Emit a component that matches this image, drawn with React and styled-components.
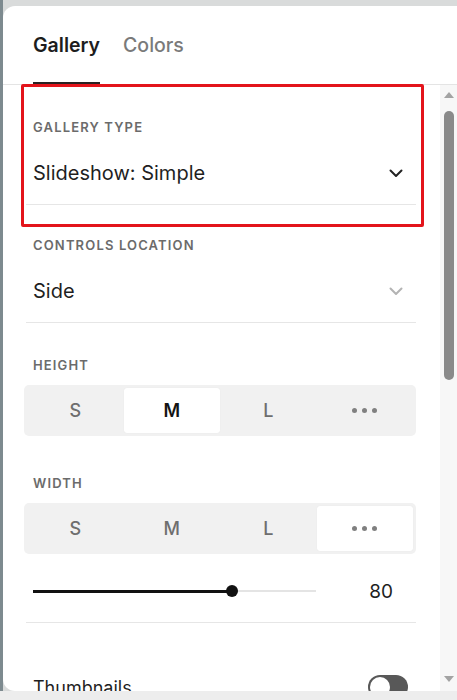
import React from "react";
import styled, { createGlobalStyle } from "styled-components";

const GlobalStyle = createGlobalStyle`
  html, body { margin: 0; padding: 0; }
  body {
    background: #d9dbdb;
    font-family: Inter, "Noto Sans", sans-serif;
    -webkit-font-smoothing: antialiased;
  }
`;

const Frame = styled.div`
  width: 457px;
  height: 700px;
  display: flex;
  flex-direction: column;
  padding-top: 6px;
  box-sizing: border-box;
  background: linear-gradient(90deg, #7d8a8f 0, #7d8a8f 3px, transparent 3px);
`;

const Panel = styled.div`
  position: relative;
  height: 685px;
  margin-left: 3px;
  background: #fff;
  border-radius: 12px 0 0 12px;
  overflow: hidden;
  display: flex;
  flex-direction: column;
  flex-shrink: 0;
`;

const BottomBar = styled.div`
  flex: 1;
  background: #ededed;
`;

const Header = styled.div`
  height: 78px;
  flex-shrink: 0;
  border-bottom: 1px solid #e4e4e4;
  display: flex;
  padding-left: 30px;
  gap: 23px;
`;

const Tab = styled.div`
  height: 78px;
  box-sizing: border-box;
  padding-top: 27px;
  font-size: 19.5px;
  line-height: 24px;
  font-weight: ${(p) => (p.$active ? 600 : 500)};
  color: ${(p) => (p.$active ? "#1d1d1d" : "#7a7a7a")};
  border-bottom: 2px solid ${(p) => (p.$active ? "#2a2222" : "transparent")};
`;

const Body = styled.div`
  flex: 1;
  min-height: 0;
  display: flex;
`;

const Content = styled.div`
  flex: 1;
  padding: 1px 24px 0 21px;
  overflow: hidden;
`;

const Section = styled.div`
  padding-top: ${(p) => p.$top}px;
  padding-bottom: ${(p) => p.$bottom}px;
  border-bottom: 1px solid #e6e6e6;
  margin-left: 2px;
`;

const Inner = styled.div`
  margin-left: -2px;
`;

const Label = styled.div`
  font-size: 13px;
  line-height: 16px;
  font-weight: 600;
  letter-spacing: 1.15px;
  color: #6b6b6b;
  padding-left: 9px;
  margin-bottom: ${(p) => p.$gap}px;
  margin-top: ${(p) => p.$mt || 0}px;
`;

const ValueRow = styled.div`
  height: 40px;
  display: flex;
  align-items: center;
  justify-content: space-between;
  padding: 0 13px 0 9px;
  font-size: 20px;
  color: #1f1f1f;
`;

const Chevron = ({ light }) => (
  <svg width="14" height="9" viewBox="0 0 14 9" fill="none">
    <path
      d="M1.5 1.5 L7 7 L12.5 1.5"
      stroke={light ? "#b3b3b3" : "#222"}
      strokeWidth="2"
      strokeLinecap="round"
      strokeLinejoin="round"
    />
  </svg>
);

const Segmented = styled.div`
  height: 51px;
  box-sizing: border-box;
  background: #f1f1f1;
  border-radius: 5px;
  padding: 3px;
  display: flex;
`;

const Segment = styled.div`
  flex: 1;
  display: flex;
  align-items: center;
  justify-content: center;
  gap: 5px;
  border-radius: 3px;
  font-size: 18px;
  font-weight: ${(p) => (p.$selected ? 600 : 500)};
  color: ${(p) => (p.$selected ? "#141414" : "#6e6e6e")};
  background: ${(p) => (p.$selected ? "#fff" : "transparent")};
  box-shadow: ${(p) => (p.$selected ? "0 0 1px rgba(0,0,0,0.08)" : "none")};
`;

const Dot = styled.span`
  width: 5px;
  height: 5px;
  border-radius: 50%;
  background: #808080;
`;

const SliderRow = styled.div`
  margin-top: 25px;
  height: 24px;
  display: flex;
  align-items: center;
  padding-left: 9px;
`;

const Track = styled.div`
  position: relative;
  width: 283px;
  height: 2px;
  background: #e4e4e4;
`;

const Fill = styled.div`
  position: absolute;
  left: 0;
  top: -0.5px;
  height: 3px;
  background: #111;
`;

const Thumb = styled.div`
  position: absolute;
  top: 50%;
  width: 12px;
  height: 12px;
  border-radius: 50%;
  background: #111;
  transform: translate(-50%, -50%);
`;

const SliderValue = styled.div`
  margin-left: auto;
  padding-right: 23px;
  font-size: 19px;
  color: #1f1f1f;
`;

const ToggleRow = styled.div`
  margin-top: 51px;
  height: 26px;
  display: flex;
  align-items: center;
  justify-content: space-between;
  padding: 0 8px 0 9px;
  font-size: 18px;
  color: #1f1f1f;
`;

const Toggle = styled.div`
  width: 40px;
  height: 24px;
  border-radius: 12px;
  background: #585858;
  padding: 2px;
  box-sizing: border-box;
  display: flex;
`;

const Knob = styled.div`
  width: 20px;
  height: 20px;
  border-radius: 50%;
  background: #fff;
`;

const Scrollbar = styled.div`
  width: 17px;
  flex-shrink: 0;
  background: #f7f7f7;
  display: flex;
  flex-direction: column;
  align-items: center;
  padding: 7px 0 9px;
  box-sizing: border-box;
`;

const ScrollThumb = styled.div`
  margin-top: 13px;
  width: 10px;
  height: 269px;
  border-radius: 5px;
  background: #8a8a8a;
`;

const Spacer = styled.div`
  flex: 1;
`;

const Arrow = ({ down }) => (
  <svg width="10" height="6" viewBox="0 0 10 6">
    <path d={down ? "M0 0 L10 0 L5 6 Z" : "M0 6 L10 6 L5 0 Z"} fill="#a3a3a3" />
  </svg>
);

const Highlight = styled.div`
  position: absolute;
  left: 18px;
  top: 78px;
  width: 403px;
  height: 143px;
  box-sizing: border-box;
  border: 3px solid #e3141b;
  border-radius: 2px;
  pointer-events: none;
`;

const Dots = () => (
  <>
    <Dot />
    <Dot />
    <Dot />
  </>
);

const SegmentGroup = ({ selected }) => (
  <Segmented>
    {["S", "M", "L", "more"].map((k) => (
      <Segment key={k} $selected={selected === k}>
        {k === "more" ? <Dots /> : k}
      </Segment>
    ))}
  </Segmented>
);

export default function App() {
  const pct = 0.703;
  return (
    <>
      <GlobalStyle />
      <Frame>
        <Panel>
          <Header>
            <Tab $active>Gallery</Tab>
            <Tab>Colors</Tab>
          </Header>
          <Body>
            <Content>
              <Section $top={33} $bottom={11}>
                <Inner>
                  <Label $gap={18}>GALLERY TYPE</Label>
                  <ValueRow>
                    Slideshow: Simple
                    <Chevron />
                  </ValueRow>
                </Inner>
              </Section>
              <Section $top={32} $bottom={11}>
                <Inner>
                  <Label $gap={18}>CONTROLS LOCATION</Label>
                  <ValueRow>
                    Side
                    <Chevron light />
                  </ValueRow>
                </Inner>
              </Section>
              <Section $top={34} $bottom={19}>
                <Inner>
                  <Label $gap={12}>HEIGHT</Label>
                  <SegmentGroup selected="M" />
                  <Label $gap={12} $mt={39}>WIDTH</Label>
                  <SegmentGroup selected="more" />
                  <SliderRow>
                    <Track>
                      <Fill style={{ width: `${pct * 100}%` }} />
                      <Thumb style={{ left: `${pct * 100}%` }} />
                    </Track>
                    <SliderValue>80</SliderValue>
                  </SliderRow>
                </Inner>
              </Section>
              <ToggleRow>
                Thumbnails
                <Toggle>
                  <Knob />
                </Toggle>
              </ToggleRow>
            </Content>
            <Scrollbar>
              <Arrow />
              <ScrollThumb />
              <Spacer />
              <Arrow down />
            </Scrollbar>
          </Body>
          <Highlight />
        </Panel>
        <BottomBar />
      </Frame>
    </>
  );
}
